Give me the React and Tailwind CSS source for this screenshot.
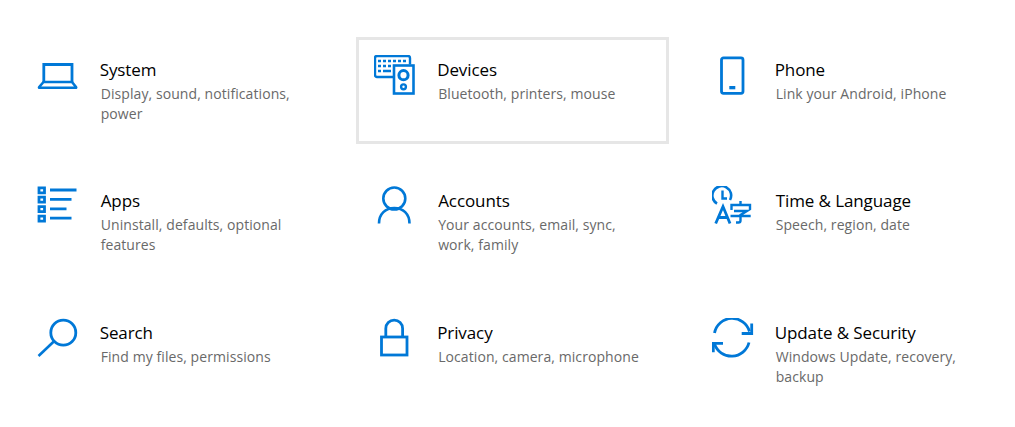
const Ic = ({ children }) => (
  <svg width="44" height="44" viewBox="0 0 44 44" fill="none" stroke="#0078d7" strokeWidth="2" className="shrink-0 block">
    {children}
  </svg>
);

const icons = {
  system: (
    <Ic>
      <path d="M6.8 27V9.5H35V27" strokeWidth="2.8" />
      <path d="M6.5 27 2.2 32c-.4.5-.2.8.4.8H38.6c.6 0 .8-.3.4-.8L35 27Z" strokeWidth="2.6" strokeLinejoin="round" />
    </Ic>
  ),
  devices: (
    <Ic>
      <path d="M19 22H3a2 2 0 0 1-2-2V3a2 2 0 0 1 2-2h31a2 2 0 0 1 2 2v6.5" strokeWidth="2.4" />
      <rect x="20" y="10.5" width="19.5" height="28" strokeWidth="2.6" />
      <circle cx="29.5" cy="20.2" r="4.6" strokeWidth="3" />
      <circle cx="29.5" cy="31.8" r="2.4" strokeWidth="2.4" />
      <path d="M4 6h3M9 6h3M14 6h3M19 6h3M24 6h3M29 6h3M4 11h3M9 11h3M14 11h3M4 16h3M9 16h8" strokeWidth="2.6" />
    </Ic>
  ),
  phone: (
    <Ic>
      <rect x="9.5" y="2.8" width="21.5" height="35.5" rx="2" strokeWidth="2.8" />
      <rect x="17.3" y="31" width="6" height="3.3" fill="#0078d7" stroke="none" />
    </Ic>
  ),
  apps: (
    <Ic>
      <path d="M2 1.8h5.5v5H2zM2 11.2h5.5v5H2zM2 20.6h5.5v5H2zM2 30.2h5.5v5H2z" strokeWidth="2.8" />
      <path d="M13 4h26.5M13 13.3h21.5M13 22.8h16.5M13 32.2h21.5" strokeWidth="2.8" />
    </Ic>
  ),
  accounts: (
    <Ic>
      <circle cx="20.3" cy="12.5" r="11" strokeWidth="2.6" />
      <path d="M5 37.5C5 28 11.5 22 20.3 22s15.2 6 15.2 15.5" strokeWidth="2.6" />
    </Ic>
  ),
  time: (
    <Ic>
      <path d="M5 17.6A9.4 9.4 0 1 1 18 14" strokeWidth="2.6" />
      <path d="M10.5 4.5v8H15" strokeWidth="2.4" />
      <path d="M3.7 37.5 11 20.5l7 17M6 31.5h10" strokeWidth="2.8" />
      <path d="M28.5 15v3.5M19.5 24v-5h18.5v5M22 25h13l-6.5 4v5.5q0 2-2 2h-2.5M18.5 30H38.7" strokeWidth="2.4" />
    </Ic>
  ),
  search: (
    <Ic>
      <circle cx="26.3" cy="14.7" r="12.5" strokeWidth="2.8" />
      <path d="M1.5 38 16.8 23.5" strokeWidth="2.6" />
    </Ic>
  ),
  privacy: (
    <Ic>
      <rect x="7.5" y="19" width="25.5" height="18" strokeWidth="2.8" />
      <path d="M11.8 19V10.5a8.4 8.4 0 0 1 16.8 0V19" strokeWidth="2.8" />
    </Ic>
  ),
  update: (
    <Ic>
      <path d="M2.5 15A18 18 0 0 1 37.5 13.5" strokeWidth="2.8" />
      <path d="M39.7 5.5v10H29.7" strokeWidth="2.8" />
      <path d="M37 24.5A18 18 0 0 1 2.5 26" strokeWidth="2.8" />
      <path d="M1.3 34.3v-9H11" strokeWidth="2.8" />
    </Ic>
  ),
};

const items = [
  ["system", "System", "Display, sound, notifications, power"],
  ["devices", "Devices", "Bluetooth, printers, mouse", true],
  ["phone", "Phone", "Link your Android, iPhone"],
  ["apps", "Apps", "Uninstall, defaults, optional features", false, true],
  ["accounts", "Accounts", "Your accounts, email, sync, work, family", false, true],
  ["time", "Time & Language", "Speech, region, date", false, true],
  ["search", "Search", "Find my files, permissions"],
  ["privacy", "Privacy", "Location, camera, microphone"],
  ["update", "Update & Security", "Windows Update, recovery, backup"],
];

export default function App() {
  return (
    <div className="w-[1015px] h-[427px] bg-white overflow-hidden pl-[18.7px] pt-[37px] font-['Open_Sans','Noto_Sans',sans-serif]">
      <div className="grid grid-cols-[313px_313px_313px] grid-rows-[107px_108px_107px] gap-x-[24.5px] gap-y-[24px]">
        {items.map(([key, title, desc, sel, nudge]) => (
          <div
            key={key}
            className={
              "flex items-start pt-[15px] pl-[15px] border-[3px] " +
              (sel ? "border-[#e6e6e6]" : "border-transparent")
            }
          >
            {icons[key]}
            <div className="ml-[19px] mt-[3px]">
              <div className={"text-[17px] leading-[24px] text-black tracking-[-0.1px] " + (nudge ? "pl-px" : "")}>{title}</div>
              <div className="w-[205px] pl-px text-[14px] leading-[20px] text-[#696969] tracking-[0.08px] mt-[2px]">{desc}</div>
            </div>
          </div>
        ))}
      </div>
    </div>
  );
}
